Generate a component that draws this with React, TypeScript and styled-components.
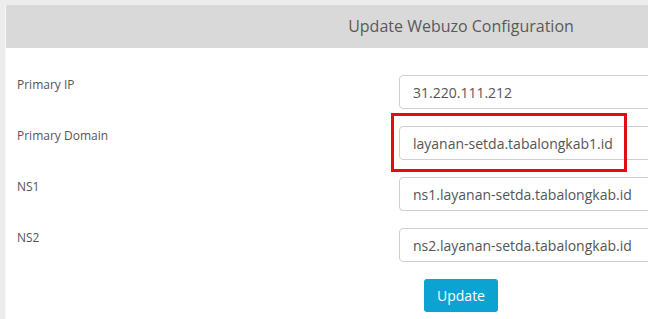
import styled, { createGlobalStyle } from "styled-components";

const GlobalStyle = createGlobalStyle`
  html, body {
    margin: 0;
    padding: 0;
    background: #ececec;
    overflow: hidden;
    font-family: "Open Sans", "Liberation Sans", sans-serif;
  }
`;

const Page = styled.div`
  width: 648px;
  height: 319px;
  padding: 5px 0 0 5px;
  box-sizing: border-box;
  overflow: hidden;
`;

const Panel = styled.div`
  width: 910px;
  height: 400px;
  background: #fff;
  border-left: 1px solid #f7f7f7;
`;

const Header = styled.div`
  height: 43px;
  background: #d9d9d9;
  display: flex;
  align-items: center;
  justify-content: center;
  color: #595959;
  font-size: 16px;
  padding-bottom: 1px;
  box-sizing: border-box;
`;

const Form = styled.div`
  padding-top: 27px;
  display: flex;
  flex-direction: column;
`;

const Row = styled.div`
  display: flex;
  height: 51px;
`;

const Label = styled.div`
  width: 393px;
  padding: 2px 0 0 11px;
  box-sizing: border-box;
  font-size: 12px;
  line-height: 16px;
  color: #555;
`;

const Field = styled.div`
  position: relative;
`;

const Input = styled.input`
  width: 300px;
  height: 34px;
  box-sizing: border-box;
  border: 1px solid #cfcfcf;
  border-radius: 4px;
  padding: 0 13px;
  font-family: "Open Sans", "Liberation Sans", sans-serif;
  font-size: 14px;
  color: #555;
  background: #fff;
  outline: none;
`;

const Highlight = styled.div`
  position: absolute;
  left: -8px;
  top: -13px;
  width: 236px;
  height: 59px;
  border: 3px solid #e30d0d;
  box-sizing: border-box;
  pointer-events: none;
`;

const Button = styled.button`
  margin-left: 25px;
  height: 33px;
  width: 74px;
  border: none;
  border-radius: 3px;
  background: #0ca3d2;
  color: #fff;
  font-family: "Open Sans", "Liberation Sans", sans-serif;
  font-size: 14px;
  padding: 0;
`;

const fields = [
  { label: "Primary IP", value: "31.220.111.212" },
  { label: "Primary Domain", value: "layanan-setda.tabalongkab1.id", marked: true },
  { label: "NS1", value: "ns1.layanan-setda.tabalongkab.id" },
  { label: "NS2", value: "ns2.layanan-setda.tabalongkab.id" },
];

export default function App() {
  return (
    <>
      <GlobalStyle />
      <Page>
        <Panel>
          <Header>Update Webuzo Configuration</Header>
          <Form>
            {fields.map((f) => (
              <Row key={f.label}>
                <Label>{f.label}</Label>
                <Field>
                  <Input defaultValue={f.value} />
                  {f.marked && <Highlight />}
                </Field>
              </Row>
            ))}
            <Row>
              <Label />
              <Field>
                <Button>Update</Button>
              </Field>
            </Row>
          </Form>
        </Panel>
      </Page>
    </>
  );
}
